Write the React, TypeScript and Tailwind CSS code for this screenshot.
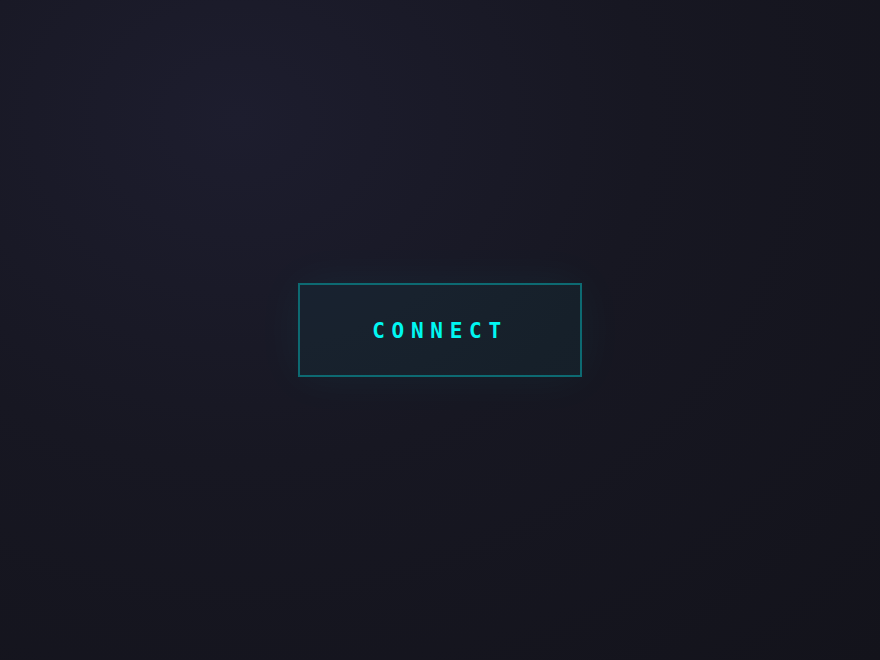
import React from 'react';

export default function App() {
  const [connected, setConnected] = React.useState(false);

  return (
    <div className="flex h-[660px] w-full items-center justify-center bg-[#13131b] bg-[radial-gradient(ellipse_at_27%_18%,#1d1d2e_0%,#171722_45%,#13131b_100%)]">
      <button
        type="button"
        onClick={() => setConnected((c) => !c)}
        className="flex h-[94px] w-[284px] items-center justify-center border-2 border-[#0d6a72] bg-[#00ffff]/[0.04] pt-[3px] shadow-[0_0_48px_rgba(0,255,255,0.05)] font-['DejaVu_Sans_Mono',monospace] text-[21px] font-bold tracking-[0.32em] text-[#00f7f2]"
      >
        {connected ? 'CONNECTED' : 'CONNECT'}
      </button>
    </div>
  );
}
